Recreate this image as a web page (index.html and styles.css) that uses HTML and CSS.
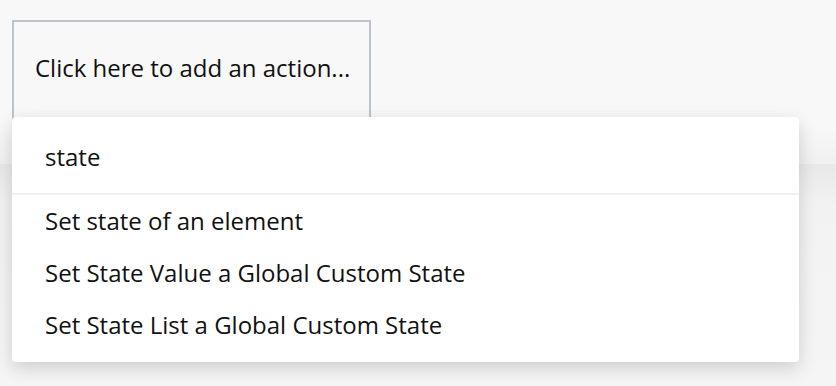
FILE: index.html
```html
<!DOCTYPE html>
<html>
<head>
<meta charset="utf-8">
<link rel="stylesheet" href="styles.css">
</head>
<body>
<div class="panel">
  <div class="action-box">Click here to add an action...</div>
</div>
<div class="lower"></div>
<div class="dropdown">
  <div class="search">state</div>
  <ul class="options">
    <li>Set state of an element</li>
    <li>Set State Value a Global Custom State</li>
    <li>Set State List a Global Custom State</li>
  </ul>
</div>
</body>
</html>
```
FILE: styles.css
```css
html, body {
  margin: 0;
  padding: 0;
  width: 836px;
  height: 386px;
  overflow: hidden;
  font-family: "Open Sans", "Noto Sans", sans-serif;
  color: #111;
  background: #f4f4f4;
  position: relative;
}
.panel {
  height: 164px;
  background: linear-gradient(to bottom, #f8f8f9 0, #f8f8f9 125px, #f0f0f0 164px);
  padding: 20px 0 0 12px;
  box-sizing: border-box;
  box-shadow: 0 2px 6px rgba(0,0,0,0.06);
}
.action-box {
  width: 359px;
  height: 110px;
  box-sizing: border-box;
  border: 2px solid #bcc3ca;
  background: linear-gradient(to bottom, #f8f8f9 0, #f8f8f9 90px, #f0f0f0 110px);
  font-size: 24px;
  padding: 30px 0 0 21px;
  line-height: 32px;
}
.lower {
  height: 222px;
  background: linear-gradient(to bottom, #e8e8e8 0, #f2f2f2 40px, #f5f5f5 222px);
}
.dropdown {
  position: absolute;
  left: 12px;
  top: 117px;
  width: 787px;
  height: 245px;
  background: #fff;
  border-radius: 4px;
  box-shadow: 0 6px 18px rgba(0,0,0,0.16);
}
.search {
  height: 78px;
  box-sizing: border-box;
  padding: 24px 0 0 33px;
  font-size: 24px;
  line-height: 32px;
  border-bottom: 2px solid #f0f0f0;
}
.options {
  list-style: none;
  margin: 0;
  padding: 10px 0 0 0;
}
.options li {
  font-size: 24px;
  line-height: 32px;
  height: 52px;
  padding-left: 33px;
  box-sizing: border-box;
}
```
